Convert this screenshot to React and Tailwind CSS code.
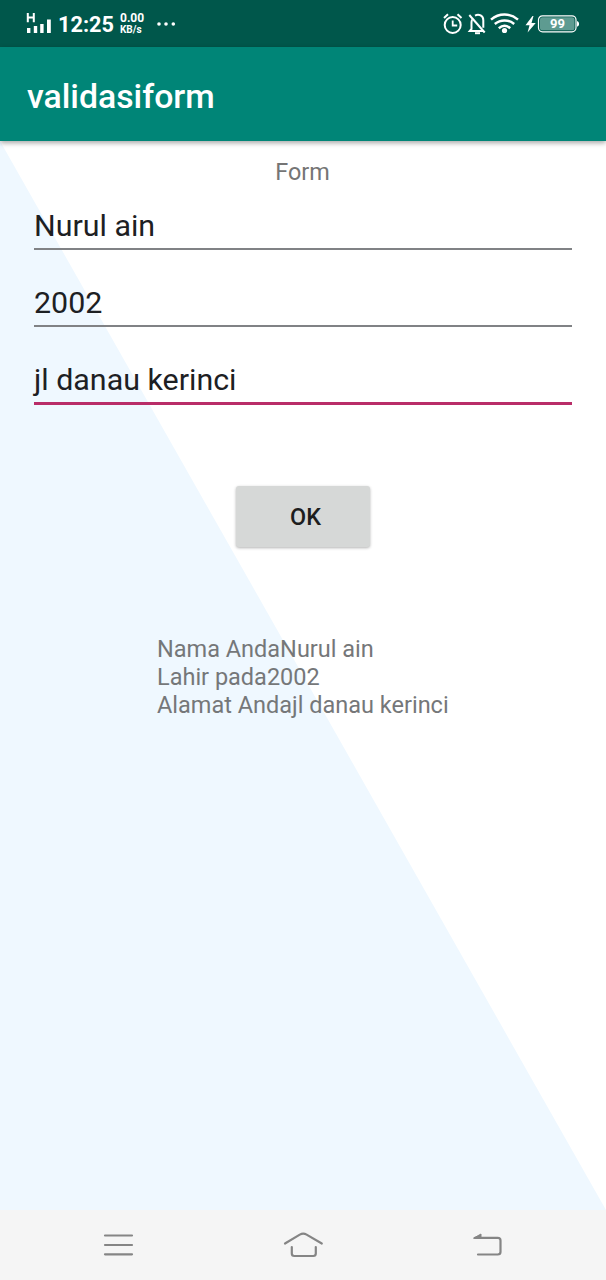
function StatusBar() {
  return (
    <div className="flex h-[47px] shrink-0 items-center justify-between bg-[#00574b] pl-[26px] pr-[27px] text-white">
      <div className="flex h-full items-center">
        <svg width="26" height="24" viewBox="0 0 26 24" fill="#fff">
          <path d="M1.8 1v9.2M7.8 1v9.2M1.8 5.4h6" stroke="#fff" strokeWidth="2" fill="none" />
          <rect x="1" y="16" width="3.4" height="5" />
          <rect x="7.8" y="14" width="3.4" height="7" />
          <rect x="14.2" y="12" width="3.4" height="9" />
          <rect x="21" y="7.5" width="3.8" height="13.5" />
        </svg>
        <span className="ml-[6px] w-[56px] whitespace-nowrap pt-[2px] text-[21.7px] font-bold leading-[26px]">12:25</span>
        <span className="ml-[6px] flex w-[26px] flex-col pt-px text-[11px] font-bold leading-[11px]">
          <span className="whitespace-nowrap text-[12px]">0.00</span>
          <span className="whitespace-nowrap text-[10px]">KB/s</span>
        </span>
        <svg className="ml-[10px]" width="20" height="4" viewBox="0 0 20 4" fill="#fff">
          <circle cx="3" cy="2" r="1.8" />
          <circle cx="10" cy="2" r="1.8" />
          <circle cx="17.3" cy="2" r="1.8" />
        </svg>
      </div>
      <svg width="137" height="24" viewBox="0 0 137 24" fill="none" stroke="#fff" strokeWidth="2">
        <circle cx="10.7" cy="13" r="8" />
        <path d="M10.7 8.5v5h4.5" strokeWidth="1.8" />
        <path d="M2 6l4-3.8M19.5 6l-4-3.8" />
        <path d="M30 7.5c-1.2 3-.2 8-.5 9.5l-1.7 2h13.5M33 3.6c4-2.2 8.3.3 8.3 4.6v7.5" strokeWidth="2" />
        <path d="M27.3 3l15.4 17.5" strokeWidth="2" />
        <path d="M33 21.2h5" />
        <path d="M49 7.6c8-6.8 19-6.8 27 0" strokeWidth="2.5" />
        <path d="M52.8 12c5.8-4.8 13.6-4.8 19.4 0" strokeWidth="2.5" />
        <path d="M56.8 16.2c3.5-3 7.9-3 11.4 0" strokeWidth="2.5" />
        <circle cx="62.5" cy="18.5" r="2.6" fill="#fff" stroke="none" />
        <path d="M90.5 4L83.5 13.2h4L85.6 20.5 93.7 11h-4.2L91.5 4z" fill="#fff" stroke="none" />
        <rect x="96.5" y="3.8" width="37.5" height="16" rx="4" fill="#00574b" strokeWidth="1.2" />
        <rect x="98" y="5.3" width="34.5" height="13" rx="2.6" fill="#5e9b91" stroke="none" />
        <path d="M135 9c3 1 3 4.8 0 5.8z" fill="#fff" stroke="none" />
        <text x="115.5" y="16.4" textAnchor="middle" fontSize="13" fontWeight="700" fill="#fff" stroke="none">99</text>
      </svg>
    </div>
  );
}

function Field({ value, focused }) {
  return (
    <div className="h-[77px] px-[34px]">
      <div className={focused ? "h-[51px] border-b-[3px] border-[#b92d68]" : "h-[50px] border-b-2 border-[#808285]"}>
        <input
          defaultValue={value}
          className="-ml-1 block h-[48px] w-full bg-transparent pt-[2px] indent-1 text-[30.4px] leading-[36px] text-[#1d2023] outline-none"
        />
      </div>
    </div>
  );
}

function NavBar() {
  return (
    <nav className="grid h-[70px] shrink-0 grid-cols-[236px_134px_236px] items-center justify-items-center bg-[#f5f5f5]">
      <svg width="32" height="26" viewBox="0 0 32 26" stroke="#858585" strokeWidth="2.2" strokeLinecap="round">
        <path d="M3 3.5h27M3 13h27M3 22.3h27" />
      </svg>
      <svg width="42" height="28" viewBox="0 0 42 28" fill="none" stroke="#858585" strokeWidth="2.2" strokeLinecap="round" strokeLinejoin="round">
        <path d="M3 12.5L17.8 3.6q3.4-1.8 6.8 0L39.8 12.5M9.8 16v6.5q0 2.5 2.5 2.5h19q2.5 0 2.5-2.5V16" />
      </svg>
      <svg width="32" height="26" viewBox="0 0 32 26" fill="none" stroke="#858585" strokeWidth="2.2" strokeLinecap="round" strokeLinejoin="round">
        <path d="M3 5.9h22.7q2.8 0 2.8 2.5v11.6q0 2.5-2.8 2.5H6" />
        <path d="M1.8 6L9 2v4z" fill="#858585" strokeWidth="1" />
      </svg>
    </nav>
  );
}

export default function App() {
  return (
    <div className="flex h-[1280px] w-[606px] flex-col overflow-hidden bg-white font-['Roboto',sans-serif]">
      <StatusBar />
      <header className="z-10 flex h-[94px] shrink-0 items-center bg-[#008577] pl-[27px] pt-[5px] text-[33.8px] font-medium leading-[40px] text-white shadow-[0_2px_5px_rgba(0,0,0,0.35)]">
        validasiform
      </header>
      <main className="relative flex min-h-0 flex-1 flex-col">
        <div className="absolute inset-0 bg-[#eff8ff] [clip-path:polygon(0_0,100%_100%,0_100%)]" />
        <div className="relative flex flex-1 flex-col">
          <p className="h-[59px] pr-px pt-[17px] text-center text-[23.4px] leading-[28px] text-[#757575]">Form</p>
          <Field value="Nurul ain" />
          <Field value="2002" />
          <Field value="jl danau kerinci" focused />
          <button className="mt-[55px] h-[61px] w-[134px] self-center rounded-[3px] bg-[#d6d8d7] pl-[5px] pt-px text-[23.4px] font-medium leading-[28px] text-[#1d1e1e] shadow-[0_1px_3px_rgba(0,0,0,0.3)]">
            OK
          </button>
          <div className="ml-[157px] mt-[89px] text-[23.5px] leading-[27.8px] text-[#757779]">
            <p>Nama AndaNurul ain</p>
            <p>Lahir pada2002</p>
            <p>Alamat Andajl danau kerinci</p>
          </div>
        </div>
      </main>
      <NavBar />
    </div>
  );
}
